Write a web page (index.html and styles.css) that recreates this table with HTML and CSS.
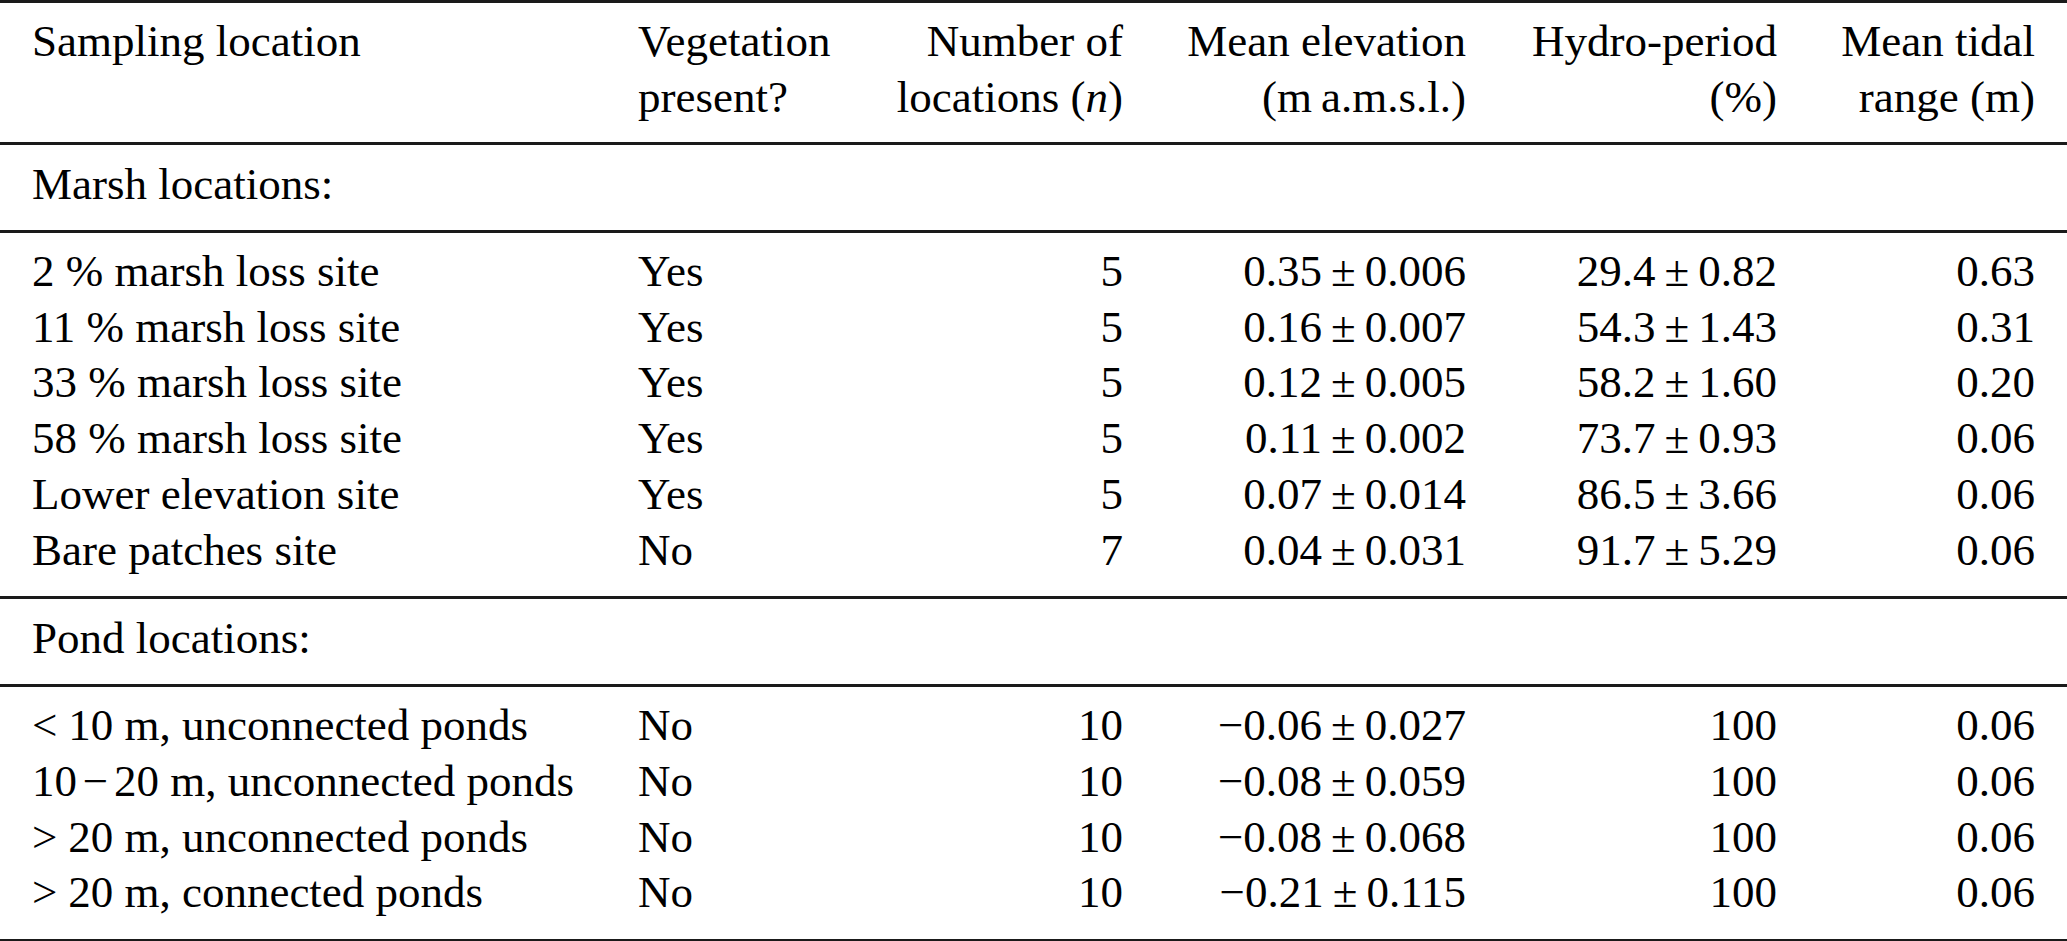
FILE: index.html
```html
<!DOCTYPE html>
<html lang="en">
<head>
<meta charset="utf-8">
<title>Sampling locations</title>
<link rel="stylesheet" href="styles.css">
</head>
<body>
<table class="data-table">
  <colgroup>
    <col class="c1"><col class="c2"><col class="c3"><col class="c4"><col class="c5"><col class="c6">
  </colgroup>
  <thead>
    <tr>
      <th class="l">Sampling location</th>
      <th class="l">Vegetation<br>present?</th>
      <th class="r">Number of<br>locations (<i>n</i>)</th>
      <th class="r">Mean elevation<br>(m&#8201;a.m.s.l.)</th>
      <th class="r">Hydro-period<br>(%)</th>
      <th class="r">Mean tidal<br>range (m)</th>
    </tr>
  </thead>
  <tbody>
    <tr class="section"><td colspan="6">Marsh locations:</td></tr>
  </tbody>
  <tbody class="group">
    <tr><td>2&nbsp;% marsh loss site</td><td>Yes</td><td class="r">5</td><td class="r">0.35<span class="pm">±</span>0.006</td><td class="r">29.4<span class="pm">±</span>0.82</td><td class="r">0.63</td></tr>
    <tr><td>11&nbsp;% marsh loss site</td><td>Yes</td><td class="r">5</td><td class="r">0.16<span class="pm">±</span>0.007</td><td class="r">54.3<span class="pm">±</span>1.43</td><td class="r">0.31</td></tr>
    <tr><td>33&nbsp;% marsh loss site</td><td>Yes</td><td class="r">5</td><td class="r">0.12<span class="pm">±</span>0.005</td><td class="r">58.2<span class="pm">±</span>1.60</td><td class="r">0.20</td></tr>
    <tr><td>58&nbsp;% marsh loss site</td><td>Yes</td><td class="r">5</td><td class="r">0.11<span class="pm">±</span>0.002</td><td class="r">73.7<span class="pm">±</span>0.93</td><td class="r">0.06</td></tr>
    <tr><td>Lower elevation site</td><td>Yes</td><td class="r">5</td><td class="r">0.07<span class="pm">±</span>0.014</td><td class="r">86.5<span class="pm">±</span>3.66</td><td class="r">0.06</td></tr>
    <tr><td>Bare patches site</td><td>No</td><td class="r">7</td><td class="r">0.04<span class="pm">±</span>0.031</td><td class="r">91.7<span class="pm">±</span>5.29</td><td class="r">0.06</td></tr>
  </tbody>
  <tbody>
    <tr class="section"><td colspan="6">Pond locations:</td></tr>
  </tbody>
  <tbody class="group">
    <tr><td><span class="rel">&lt;</span>10&nbsp;m, unconnected ponds</td><td>No</td><td class="r">10</td><td class="r">−0.06<span class="pm">±</span>0.027</td><td class="r">100</td><td class="r">0.06</td></tr>
    <tr><td>10<span class="dash">−</span>20&nbsp;m, unconnected ponds</td><td>No</td><td class="r">10</td><td class="r">−0.08<span class="pm">±</span>0.059</td><td class="r">100</td><td class="r">0.06</td></tr>
    <tr><td><span class="rel">&gt;</span>20&nbsp;m, unconnected ponds</td><td>No</td><td class="r">10</td><td class="r">−0.08<span class="pm">±</span>0.068</td><td class="r">100</td><td class="r">0.06</td></tr>
    <tr><td><span class="rel">&gt;</span>20&nbsp;m, connected ponds</td><td>No</td><td class="r">10</td><td class="r">−0.21<span class="pm">±</span>0.115</td><td class="r">100</td><td class="r">0.06</td></tr>
  </tbody>
</table>
</body>
</html>
```
FILE: styles.css
```css
html, body {
  margin: 0;
  padding: 0;
  background: #ffffff;
}

body {
  font-family: "Liberation Serif", "Times New Roman", serif;
  font-size: 45px;
  color: #000000;
}

.data-table {
  width: 2067px;
  table-layout: fixed;
  border-collapse: separate;
  border-spacing: 0;
  border-top: 3px solid #1a1a1a;
}

.c1 { width: 606px; }
.c2 { width: 257px; }
.c3 { width: 292px; }
.c4 { width: 343px; }
.c5 { width: 311px; }
.c6 { width: 258px; }

.data-table th,
.data-table td {
  padding: 0 32px;
  line-height: 55.75px;
  white-space: nowrap;
  font-weight: normal;
  vertical-align: top;
  text-align: left;
}

.data-table th {
  line-height: 56px;
  padding-top: 10px;
  padding-bottom: 17px;
  border-bottom: 3px solid #1a1a1a;
}

.data-table .l { text-align: left; }
.data-table .r { text-align: right; }

.section td {
  padding-top: 12px;
  padding-bottom: 17px;
  border-bottom: 3px solid #1a1a1a;
}

.group tr:first-child td { padding-top: 11px; }
.group tr:last-child td {
  padding-bottom: 18px;
  border-bottom: 3px solid #1a1a1a;
}

.pm { margin: 0 0.2em; }
.rel { margin-right: 0.24em; }
.dash { margin: 0 0.13em; }
```
